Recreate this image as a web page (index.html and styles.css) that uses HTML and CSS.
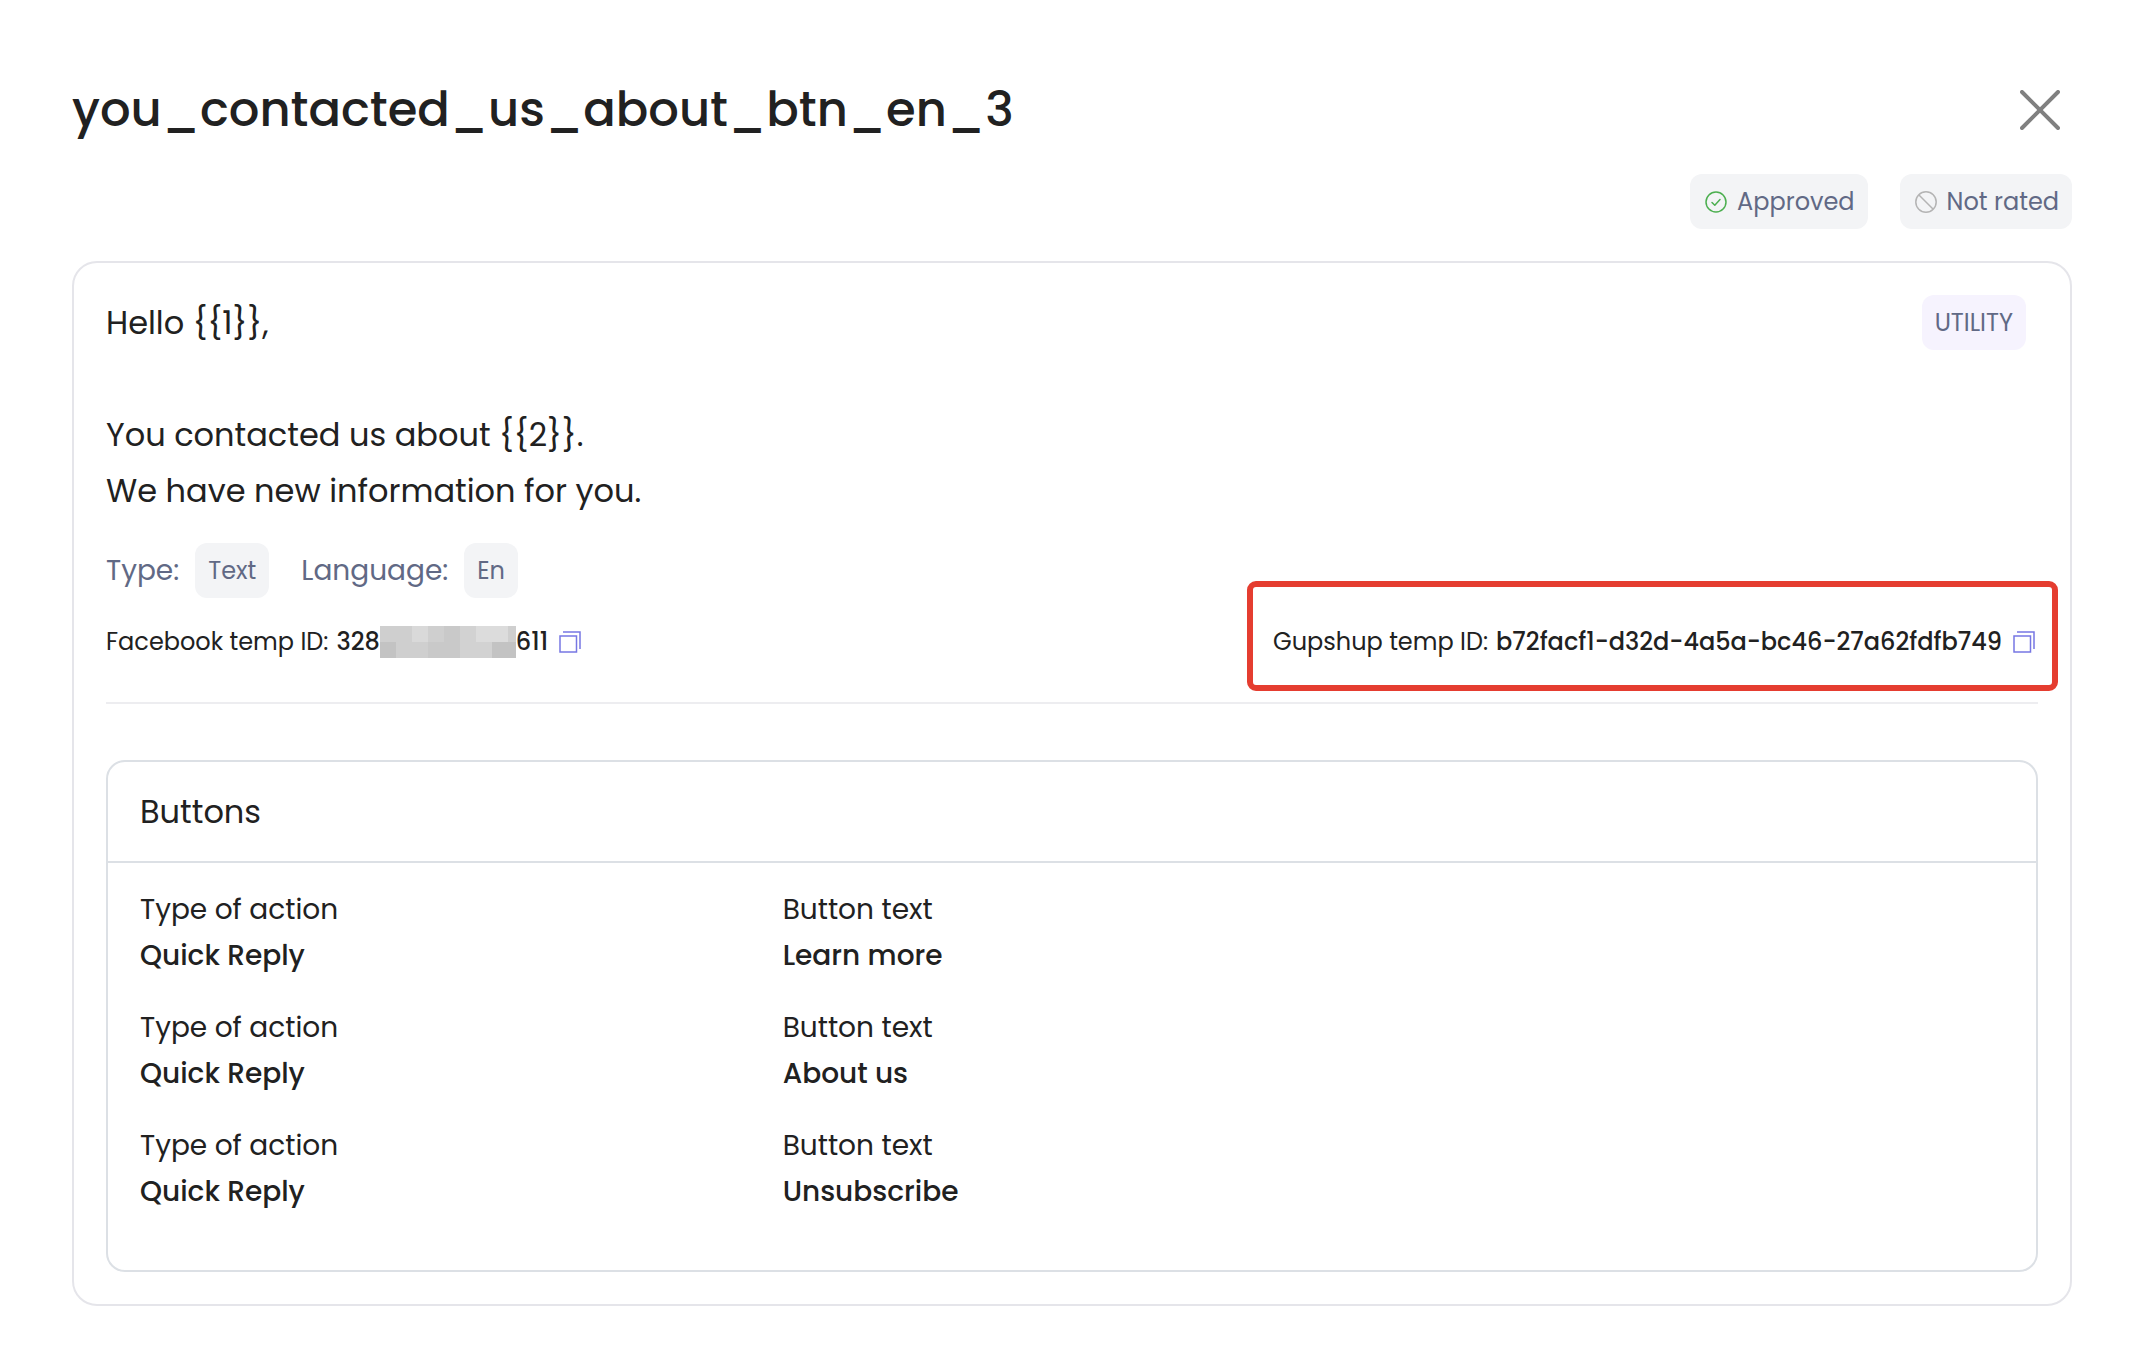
FILE: index.html
```html
<!DOCTYPE html>
<html lang="en">
<head>
    <meta charset="UTF-8">
    <meta name="viewport" content="width=device-width, initial-scale=1.0">
    <title>you_contacted_us_about_btn_en_3</title>
    <link rel="stylesheet" href="styles.css">
</head>
<body>
    <main class="modal">
        <header class="modal-header">
            <h1>you_contacted_us_about_btn_en_3</h1>
            <button type="button" class="close-btn" aria-label="Close">
                <svg width="40" height="40" viewBox="0 0 40 40" fill="none" stroke="#808080" stroke-width="4" stroke-linecap="round">
                    <path d="M2 2L38 38M38 2L2 38"/>
                </svg>
            </button>
        </header>

        <div class="statuses">
            <span class="badge">
                <svg width="22" height="22" viewBox="0 0 22 22" fill="none" stroke="#4caf50" stroke-width="1.5" stroke-linecap="round" stroke-linejoin="round">
                    <circle cx="11" cy="11" r="10"/>
                    <path d="M7 11.5L9.8 14.3L15 8.6"/>
                </svg>
                Approved
            </span>
            <span class="badge">
                <svg width="22" height="22" viewBox="0 0 22 22" fill="none" stroke="#b4b4b4" stroke-width="1.5">
                    <circle cx="11" cy="11" r="10.2"/>
                    <path d="M4 4L18 18"/>
                </svg>
                Not rated
            </span>
        </div>

        <section class="card">
            <div class="message">
                <p class="message-text">Hello {{1}},

You contacted us about {{2}}.
We have new information for you.</p>
                <span class="badge badge-category">UTILITY</span>
            </div>

            <div class="meta">
                <span>Type:</span>
                <span class="badge">Text</span>
                <span class="meta-language">Language:</span>
                <span class="badge">En</span>
            </div>

            <div class="ids">
                <div class="temp-id">
                    <span>Facebook temp ID:</span>
                    <strong>328<svg class="masked" width="136" height="32" viewBox="0 0 136 32" shape-rendering="crispEdges">
                        <path fill="#cfcfcf" d="M0 0h136v32H0z"/>
                        <path fill="#d9d9d9" d="M32 0h16v16H32z"/>
                        <path fill="#c9c9c9" d="M64 0h16v16H64z"/>
                        <path fill="#dcdcdc" d="M96 0h32v16H96z"/>
                        <path fill="#c3c3c3" d="M0 16h16v16H0zM112 16h24v16h-24z"/>
                        <path fill="#c9c9c9" d="M48 16h32v16H48z"/>
                        <path fill="#d2d2d2" d="M80 0h16v16h16v16H80z"/>
                    </svg>611</strong>
                    <button type="button" class="copy-btn" aria-label="Copy Facebook temp ID">
                        <svg width="22" height="22" viewBox="0 0 22 22" fill="none" stroke="#7777e3" stroke-width="1.5">
                            <path d="M1 5H17.5V21H1Z"/>
                            <path d="M4 1H21V18"/>
                        </svg>
                    </button>
                </div>
                <div class="temp-id highlighted">
                    <span>Gupshup temp ID:</span>
                    <strong>b72facf1-d32d-4a5a-bc46-27a62fdfb749</strong>
                    <button type="button" class="copy-btn" aria-label="Copy Gupshup temp ID">
                        <svg width="22" height="22" viewBox="0 0 22 22" fill="none" stroke="#7777e3" stroke-width="1.5">
                            <path d="M1 5H17.5V21H1Z"/>
                            <path d="M4 1H21V18"/>
                        </svg>
                    </button>
                </div>
            </div>

            <section class="buttons">
                <h2>Buttons</h2>
                <div class="buttons-list">
                    <dl class="button-row">
                        <div>
                            <dt>Type of action</dt>
                            <dd>Quick Reply</dd>
                        </div>
                        <div>
                            <dt>Button text</dt>
                            <dd>Learn more</dd>
                        </div>
                    </dl>
                    <dl class="button-row">
                        <div>
                            <dt>Type of action</dt>
                            <dd>Quick Reply</dd>
                        </div>
                        <div>
                            <dt>Button text</dt>
                            <dd>About us</dd>
                        </div>
                    </dl>
                    <dl class="button-row">
                        <div>
                            <dt>Type of action</dt>
                            <dd>Quick Reply</dd>
                        </div>
                        <div>
                            <dt>Button text</dt>
                            <dd>Unsubscribe</dd>
                        </div>
                    </dl>
                </div>
            </section>
        </section>
    </main>
</body>
</html>
```
FILE: styles.css
```css
/* General styles */
* {
    margin: 0;
    padding: 0;
    box-sizing: border-box;
}

body {
    background: #fff;
    color: #212121;
    font-family: 'Poppins', 'Inter', sans-serif;
    font-size: 32px;
}

button {
    display: flex;
    background: none;
    border: none;
    cursor: pointer;
}

svg {
    flex-shrink: 0;
}

.modal {
    padding: 74px 80px 66px 72px;
}

/* Header */
.modal-header {
    display: flex;
    justify-content: space-between;
    align-items: center;
    padding-right: 12px;
}

h1 {
    font-size: 48px;
    font-weight: 500;
    line-height: 72px;
}

.statuses {
    display: flex;
    justify-content: flex-end;
    gap: 32px;
    margin: 28px 0 32px;
}

.badge {
    display: inline-flex;
    align-items: center;
    gap: 10px;
    height: 55px;
    padding: 0 13px;
    border-radius: 12px;
    background: #f3f4f6;
    color: #616985;
    font-size: 24px;
}

.statuses .badge {
    padding-left: 15px;
}

/* Card */
.card {
    padding: 32px;
    border: 2px solid #e5e5ea;
    border-radius: 25px;
}

.message {
    display: flex;
    justify-content: space-between;
    align-items: flex-start;
    padding-right: 12px;
}

.message-text {
    line-height: 56px;
    white-space: pre-line;
}

.badge-category {
    background: #f6f3fe;
}

.meta {
    display: flex;
    align-items: center;
    gap: 16px;
    margin-top: 24px;
    color: #616985;
    font-size: 28px;
}

.meta-language {
    margin-left: 16px;
}

.ids {
    display: flex;
    justify-content: space-between;
    padding: 25px 0 41px;
    border-bottom: 2px solid #ededf0;
}

.temp-id {
    position: relative;
    display: flex;
    align-items: center;
    gap: 8px;
    padding-right: 3px;
    font-size: 24px;
    line-height: 38px;
}

.temp-id strong {
    display: flex;
    align-items: center;
    font-weight: 500;
}

.copy-btn {
    margin-left: 3px;
}

/* Red frame drawn over the card around the id */
.highlighted::before {
    content: '';
    position: absolute;
    inset: -42px -20px -30px -26px;
    border: 6px solid #e53d30;
    border-radius: 9px;
    pointer-events: none;
}

/* Buttons */
.buttons {
    margin-top: 56px;
    border: 2px solid #dce0e5;
    border-radius: 19px;
}

h2 {
    padding: 21px 32px;
    border-bottom: 2px solid #dce0e5;
    font-size: 32px;
    font-weight: 400;
    line-height: 57px;
}

.buttons-list {
    display: grid;
    gap: 26px;
    padding: 24px 0 55px;
    font-size: 28px;
    line-height: 46px;
}

.button-row {
    display: grid;
    grid-template-columns: repeat(3, 1fr);
}

.button-row div {
    padding: 0 32px;
}

dd {
    font-weight: 500;
}
```
